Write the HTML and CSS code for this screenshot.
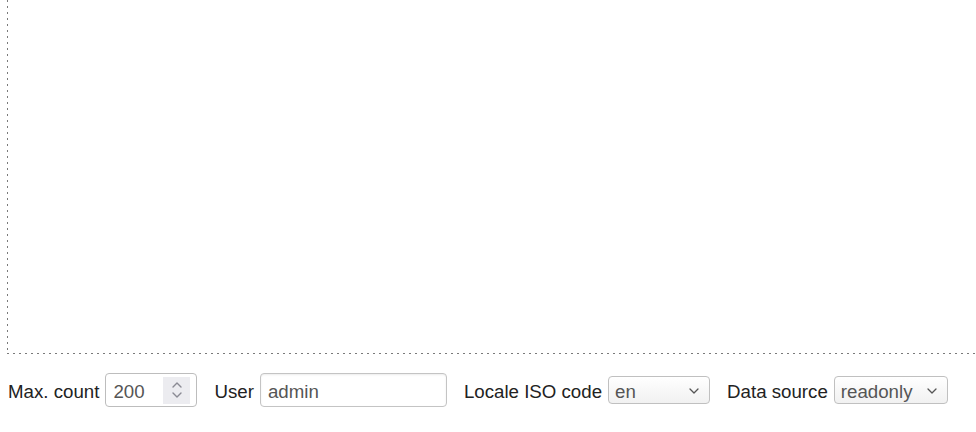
FILE: index.html
```html
<!DOCTYPE html>
<html>
<head>
<meta charset="utf-8">
<link rel="stylesheet" href="styles.css">
</head>
<body>
<div class="canvas"></div>
<div class="toolbar">
  <div class="group">
    <span class="label">Max. count</span>
    <div class="field number">
      <span class="value">200</span>
      <span class="spinner">
        <svg width="12" height="20" viewBox="0 0 12 20"><path d="M2 7 L6 3 L10 7" fill="none" stroke="#8a8a94" stroke-width="1.4" stroke-linecap="round" stroke-linejoin="round"/><path d="M2 13 L6 17 L10 13" fill="none" stroke="#8a8a94" stroke-width="1.4" stroke-linecap="round" stroke-linejoin="round"/></svg>
      </span>
    </div>
  </div>
  <div class="group">
    <span class="label">User</span>
    <div class="field text"><span class="value">admin</span></div>
  </div>
  <div class="group">
    <span class="label">Locale ISO code</span>
    <div class="field select locale">
      <span class="value">en</span>
      <svg class="chev" width="10" height="6" viewBox="0 0 10 6"><path d="M1 1 L5 5 L9 1" fill="none" stroke="#555" stroke-width="1.3" stroke-linecap="round" stroke-linejoin="round"/></svg>
    </div>
  </div>
  <div class="group">
    <span class="label">Data source</span>
    <div class="field select source">
      <span class="value">readonly</span>
      <svg class="chev" width="10" height="6" viewBox="0 0 10 6"><path d="M1 1 L5 5 L9 1" fill="none" stroke="#555" stroke-width="1.3" stroke-linecap="round" stroke-linejoin="round"/></svg>
    </div>
  </div>
</div>
</body>
</html>
```
FILE: styles.css
```css
html, body {
  margin: 0;
  padding: 0;
  background: #fff;
  overflow: hidden;
}
body {
  width: 976px;
  height: 432px;
  font-family: "Liberation Sans", Arial, sans-serif;
  font-size: 18.7px;
  color: #222;
}
.canvas {
  margin-left: 7px;
  height: 354px;
  background-image:
    linear-gradient(to bottom, #7a7a7a 0 2px, transparent 2px 6px),
    linear-gradient(to right, #7a7a7a 0 2px, transparent 2px 6px);
  background-size: 1px 6px, 6px 1px;
  background-repeat: repeat-y, repeat-x;
  background-position: left bottom, left bottom;
}
.toolbar {
  display: flex;
  align-items: center;
  gap: 17px;
  padding: 19px 0 0 8px;
}
.group {
  display: flex;
  align-items: center;
  gap: 6px;
}
.label {
  white-space: nowrap;
  padding-top: 3px;
}
.field {
  box-sizing: border-box;
  display: flex;
  align-items: center;
  border: 1px solid #bdbdbd;
  border-radius: 4px;
  background: #fff;
  color: #555;
}
.value {
  white-space: nowrap;
  padding-top: 3px;
}
.number {
  width: 92px;
  height: 34px;
  padding: 0 6px 0 7px;
  justify-content: space-between;
}
.spinner {
  width: 27px;
  height: 27px;
  background: #ececf0;
  display: flex;
  align-items: center;
  justify-content: center;
}
.text {
  width: 187px;
  height: 34px;
  padding-left: 7px;
  border-color: #c4c4c4;
  box-shadow: inset 0 1px 2px rgba(0,0,0,0.08);
}
.select {
  height: 28px;
  padding: 0 10px 0 6px;
  justify-content: space-between;
  background: linear-gradient(#ffffff, #f1f1f1);
  border-color: #c0c0c0;
}
.locale {
  width: 102px;
}
.source {
  width: 114px;
}
.chev {
  margin-top: 2px;
}
```
